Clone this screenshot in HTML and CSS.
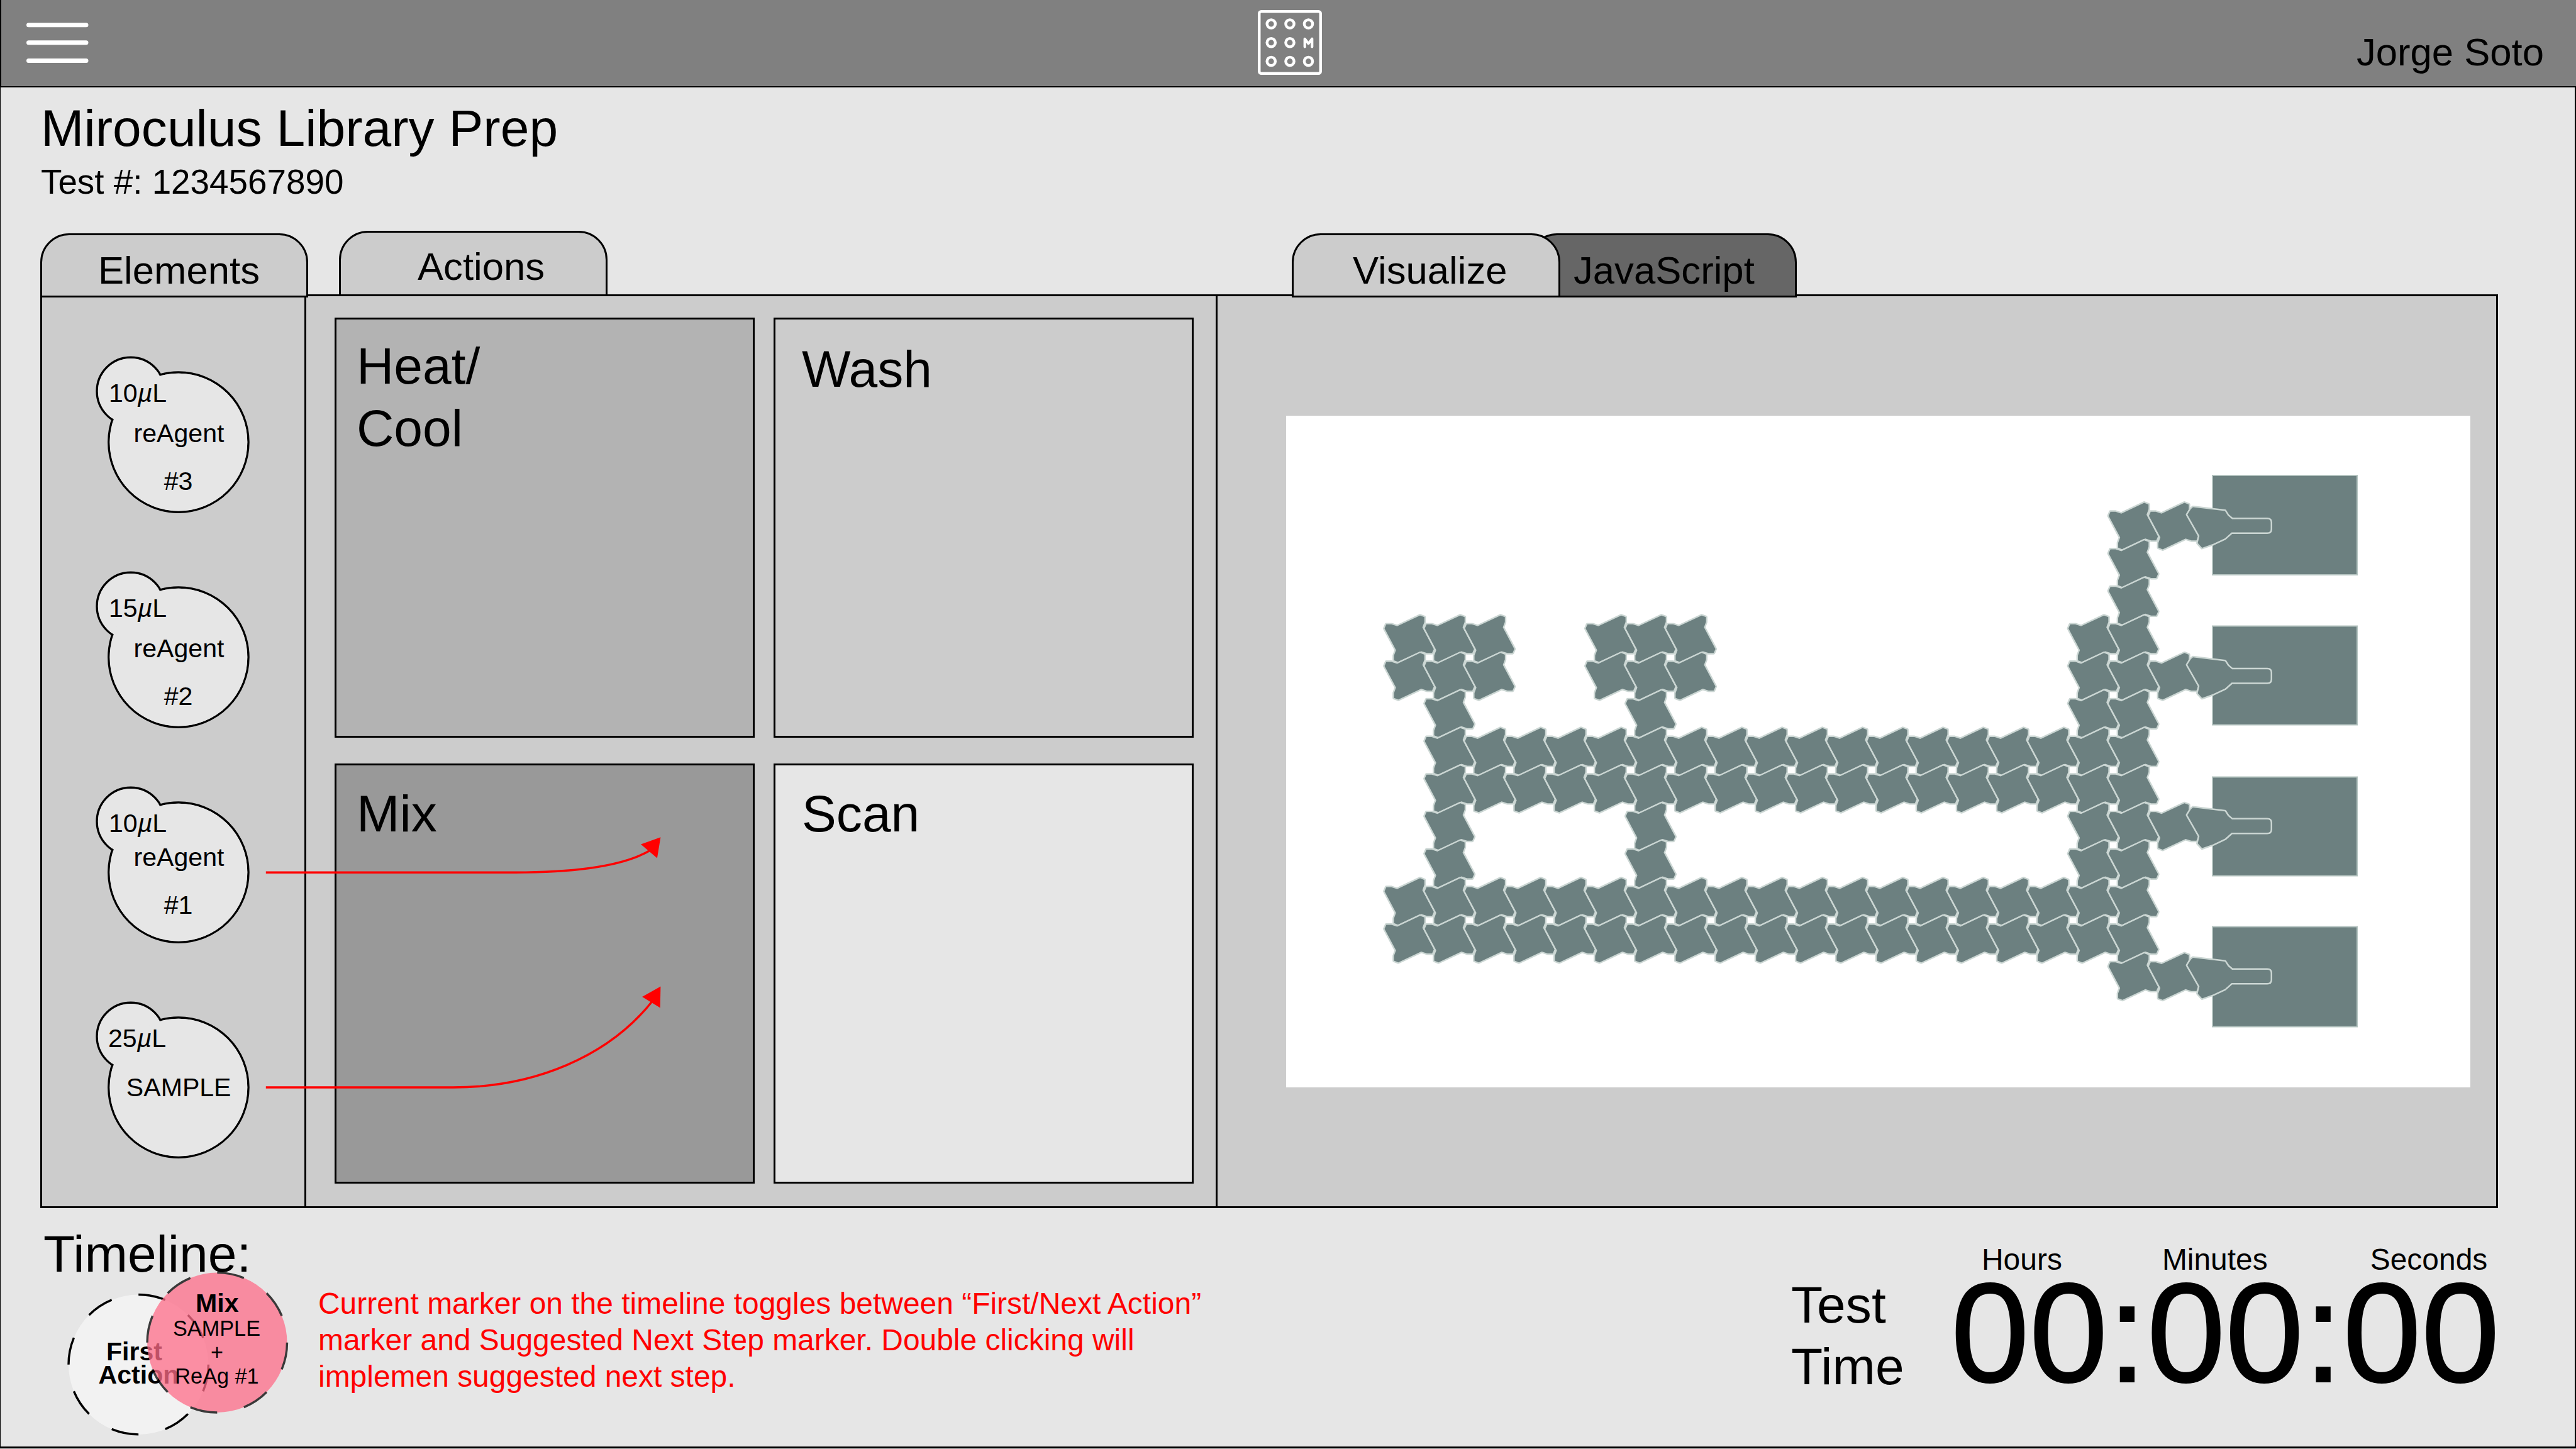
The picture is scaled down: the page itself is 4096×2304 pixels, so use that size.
FILE: index.html
```html
<!DOCTYPE html>
<html lang="en">
<head>
<meta charset="utf-8">
<title>Miroculus Library Prep</title>
<link rel="stylesheet" href="styles.css">
</head>
<body>
<div class="window">
  <header class="topbar">
    <svg class="menu" viewBox="0 0 100 66"><path d="M4.5 4.7H96M4.5 32.8H96M4.5 61.5H96"/></svg>
    <svg class="logo" viewBox="0 0 370 374">
      <rect x="8" y="8" width="354" height="358" rx="12"/>
      <g>
        <circle cx="77" cy="80" r="24"/><circle cx="185" cy="80" r="24"/><circle cx="292" cy="80" r="24"/>
        <circle cx="77" cy="188" r="24"/><circle cx="185" cy="188" r="24"/>
        <circle cx="77" cy="296" r="24"/><circle cx="185" cy="296" r="24"/><circle cx="292" cy="296" r="24"/>
      </g>
      <path d="M271 212V166L292 193L313 166V212"/>
    </svg>
    <span class="user">Jorge Soto</span>
  </header>

  <section class="heading">
    <h1>Miroculus Library Prep</h1>
    <p>Test #: 1234567890</p>
  </section>

  <main class="workspace">
    <nav class="tabs">
      <span class="tab tab-elements">Elements</span>
      <span class="tab tab-actions">Actions</span>
      <span class="tab tab-visualize">Visualize</span>
      <span class="tab tab-script">JavaScript</span>
    </nav>

    <div class="panels">
      <section class="panel elements">
        <svg class="bead" viewBox="0 0 260 342.1">
          <g class="outline"><circle cx="63.9" cy="62.1" r="53.8"/><circle cx="139.9" cy="143.1" r="111.1"/></g>
          <g class="body"><circle cx="63.9" cy="62.1" r="52.1"/><circle cx="139.9" cy="143.1" r="109.4"/></g>
          <text x="29" y="78.9">10<tspan class="mu">µ</tspan>L</text>
          <text class="mid" x="140.5" y="142.6">reAgent</text>
          <text class="mid" x="139.5" y="219.1">#3</text>
        </svg>
        <svg class="bead" viewBox="0 0 260 342.1">
          <g class="outline"><circle cx="63.9" cy="62.1" r="53.8"/><circle cx="139.9" cy="143.1" r="111.1"/></g>
          <g class="body"><circle cx="63.9" cy="62.1" r="52.1"/><circle cx="139.9" cy="143.1" r="109.4"/></g>
          <text x="29" y="78.9">15<tspan class="mu">µ</tspan>L</text>
          <text class="mid" x="140.5" y="142.6">reAgent</text>
          <text class="mid" x="139.5" y="219.1">#2</text>
        </svg>
        <svg class="bead" viewBox="0 0 260 342.1">
          <g class="outline"><circle cx="63.9" cy="62.1" r="53.8"/><circle cx="139.9" cy="143.1" r="111.1"/></g>
          <g class="body"><circle cx="63.9" cy="62.1" r="52.1"/><circle cx="139.9" cy="143.1" r="109.4"/></g>
          <text x="29" y="78.9">10<tspan class="mu">µ</tspan>L</text>
          <text class="mid" x="140.5" y="133.4">reAgent</text>
          <text class="mid" x="139.5" y="208.8">#1</text>
        </svg>
        <svg class="bead" viewBox="0 0 260 342.1">
          <g class="outline"><circle cx="63.9" cy="62.1" r="53.8"/><circle cx="139.9" cy="143.1" r="111.1"/></g>
          <g class="body"><circle cx="63.9" cy="62.1" r="52.1"/><circle cx="139.9" cy="143.1" r="109.4"/></g>
          <text x="28" y="78.9">25<tspan class="mu">µ</tspan>L</text>
          <text class="mid" x="140.2" y="157.4">SAMPLE</text>
        </svg>
      </section>

      <section class="panel actions">
        <div class="card heat">Heat/<br>Cool</div>
        <div class="card wash">Wash</div>
        <div class="card mix">Mix</div>
        <div class="card scan">Scan</div>
      </section>

      <section class="panel visual">
        <svg class="chip" viewBox="2045 661 1883 1068">
          <defs>
            <path id="tile" transform="scale(.965)" d="M17.9-38.3L25-35.6V-27.6L21.7-18.7L40.6 16.9L37.7 23.6H29.3L19.8 20.5L-17.9 38.3L-25 35.6V27.6L-21.7 18.7L-40.6-16.9L-37.7-23.6H-29.3L-19.8-20.5Z"/>
            <path id="nozzle" d="M-42-18.2L-36.5-27L-33.2-30L17.7-23.9L22.3-16.7L29-11H85Q90.4-11 90.4-6V5Q90.4 10 85 10H28.3L17.7 19.5L-1.1 28.3L-18.7 34.5L-25.5 27L-22.8 15.4Z"/>
          </defs>
          <g class="pads">
            <rect x="3518" y="756" width="230" height="158"/>
            <rect x="3518" y="995.5" width="230" height="157"/>
            <rect x="3518" y="1235.5" width="230" height="157"/>
            <rect x="3518" y="1473.5" width="230" height="159"/>
          </g>
          <g id="tiles" class="tiles"></g>
        </svg>
      </section>

      <svg class="arrows" viewBox="420 1325 640 410">
        <path class="line" d="M422.8 1387.2H819.4C915 1387.2 990 1378 1034 1352"/>
        <path class="head" d="M1050.4 1331.3L1019 1342.5L1044.9 1364.5Z"/>
        <path class="line" d="M422.8 1729H720.6C850 1729 968 1680 1038 1591"/>
        <path class="head" d="M1050.4 1568.6L1021.1 1585L1049.7 1602.6Z"/>
      </svg>
    </div>
  </main>

  <footer class="footer">
    <section class="timeline">
      <h2>Timeline:</h2>
      <svg class="markers" viewBox="105 2020 360 270">
        <circle class="first" cx="220.2" cy="2169.7" r="111.2" pathLength="16"/>
        <text class="strong" x="213.5" y="2162.6">First</text>
        <text class="strong" x="220.5" y="2200.4">Action</text>
        <circle class="next" cx="345.3" cy="2134.8" r="111.2" pathLength="16"/>
        <text class="strong" x="345.3" y="2086.4">Mix</text>
        <text x="344.5" y="2124">SAMPLE</text>
        <text x="345" y="2161.8">+</text>
        <text x="345" y="2199.6">ReAg #1</text>
      </svg>
    </section>
    <p class="note">Current marker on the timeline toggles between “First/Next Action”<br>marker and Suggested Next Step marker. Double clicking will<br>implemen suggested next step.</p>
    <div class="timer-label">Test<br>Time</div>
    <div class="timer">
      <div class="units"><span>Hours</span><span>Minutes</span><span>Seconds</span></div>
      <div class="digits">00:00:00</div>
    </div>
  </footer>
</div>
<script src="chip.js"></script>
</body>
</html>
```
FILE: chip.js
```js
// Electrode grid: column numbers of the tiles present in each row.
const PITCH_X = 63.97, PITCH_Y = 59.7, ORIGIN_X = 2240.7, ORIGIN_Y = 1015.6;
const span = (a, b) => Array.from({ length: b - a + 1 }, (_, i) => a + i);
const rows = [
  [-3, [18, 19]], [-2, [18]], [-1, [18]],
  [0, [0, 1, 2, 5, 6, 7, 17, 18]],
  [1, [0, 1, 2, 5, 6, 7, 17, 18, 19]],
  [2, [1, 6, 17, 18]],
  [3, span(1, 18)], [4, span(1, 18)],
  [5, [1, 6, 17, 18, 19]],
  [6, [1, 6, 17, 18]],
  [7, span(0, 18)], [8, span(0, 18)],
  [9, [18, 19]]
];
const group = document.getElementById('tiles');
function place(shape, col, row) {
  const use = document.createElementNS('http://www.w3.org/2000/svg', 'use');
  use.setAttribute('href', '#' + shape);
  use.setAttribute('x', ORIGIN_X + col * PITCH_X);
  use.setAttribute('y', ORIGIN_Y + row * PITCH_Y);
  group.appendChild(use);
}
for (const [row, cols] of rows) {
  for (const col of cols) place('tile', col, row);
  if (cols.includes(19)) place('nozzle', 20, row);
}
```
FILE: styles.css
```css
* { box-sizing: border-box; }
body {
  margin: 0;
  background: #ccc;
  color: #000;
  font-family: "Liberation Sans", Arial, Helvetica, sans-serif;
}
h1, h2, p { margin: 0; font-weight: 400; }
svg { display: block; }

.window {
  width: 4096px;
  height: 2303px;
  background: #e6e6e6;
  box-shadow: inset 1px 0 #000, inset -2px 0 #000, inset 0 -3px #000;
  overflow: hidden;
}

.topbar {
  height: 139px;
  background: #808080;
  border-bottom: 2px solid #000;
  border-left: 2px solid #000;
  display: grid;
  grid-template-columns: 1fr 102px 1fr;
}
.menu { width: 100px; height: 66px; margin: 35px 0 0 39px; }
.menu path { stroke: #fff; stroke-width: 7; stroke-linecap: round; }
.logo { width: 102px; height: 103px; margin-top: 16px; fill: none; stroke: #fff; stroke-width: 16; position: relative; left: 2px; }
.logo path { stroke-width: 15; stroke-linecap: round; stroke-linejoin: round; }
.user { justify-self: end; margin: 48px 51px 0 0; font-size: 61.65px; line-height: 70px; }

.heading { padding: 16px 0 0 65px; height: 228px; }
.heading h1 { font-size: 82.2px; line-height: 98px; }
.heading p { font-size: 54.8px; line-height: 66px; margin-top: 3px; }

.workspace { width: 3908px; margin-left: 64px; }
.tabs { display: flex; height: 101px; align-items: flex-start; }
.tab {
  width: 427px;
  height: 102px;
  margin-top: 4px;
  border: 3px solid #000;
  border-radius: 46px 46px 0 0;
  background: #ccc;
  font-size: 61.65px;
  line-height: 70px;
  position: relative;
  z-index: 1;
}
.tab-elements { width: 426px; padding: 21px 0 0 89px; }
.tab-actions { margin: 0 0 0 49px; height: 104px; padding: 19px 0 0 122px; }
.tab-visualize { margin-left: 1088px; padding: 21px 0 0 94px; z-index: 2; }
.tab-script { margin-left: -51px; padding: 21px 0 0 69px; background: #666; }

.panels { display: flex; height: 1453px; position: relative; }
.panel { border: 3px solid #000; background: #ccc; }
.panel + .panel { margin-left: -3px; }
.elements { width: 423px; padding: 89px 0 0 77px; }
.bead { width: 260px; height: 342.1px; font-size: 41.1px; }
.bead .outline { fill: none; stroke: #000; stroke-width: 3.43; }
.bead .body { fill: #e6e6e6; }
.bead .mid { text-anchor: middle; }
.bead .mu { font-style: italic; }

.actions {
  width: 1452px;
  padding: 34px 0 0 45px;
  display: grid;
  grid-template-columns: 668px 668px;
  grid-template-rows: 668px 668px;
  gap: 41px 30px;
}
.card { border: 3px solid #000; font-size: 82.2px; line-height: 98.6px; }
.heat { background: #b3b3b3; padding: 25px 0 0 32px; }
.wash { background: #ccc; padding: 30px 0 0 42px; }
.mix { background: #999; padding: 28px 0 0 32px; }
.scan { background: #e6e6e6; padding: 28px 0 0 42px; }

.visual { width: 2039px; padding: 190px 0 0 109px; }
.chip { width: 1883px; height: 1068px; background: #fff; }
.pads { fill: #6c8080; stroke: #b4c3c0; stroke-width: 2; }
.tiles { fill: #6c8080; stroke: #cbd6d3; stroke-width: 5; stroke-linejoin: round; paint-order: stroke; }

.arrows { position: absolute; left: 356px; top: 857px; width: 640px; height: 410px; z-index: 3; }
.arrows .line { fill: none; stroke: #f00; stroke-width: 3.43; }
.arrows .head { fill: #f00; }

.footer { display: flex; align-items: flex-start; }
.timeline { width: 396px; margin: 24px 0 0 69px; }
.timeline h2 { font-size: 82.2px; line-height: 98.6px; }
.markers { width: 360px; height: 270px; margin: -23.6px 0 0 36px; font-size: 34.25px; text-anchor: middle; }
.markers circle { stroke: #000; stroke-width: 3.43; stroke-dasharray: 1 1; }
.markers .first { fill: #f2f2f2; }
.markers .next { fill: #ff6d89; opacity: .75; }
.markers .strong { font-size: 41.1px; font-weight: 700; }
.note { margin: 123.4px 0 0 41px; width: 1500px; font-size: 47.95px; line-height: 57.8px; color: #f00; white-space: nowrap; }
.timer-label { margin: 104.7px 0 0 842px; width: 254px; font-size: 82.2px; line-height: 98.6px; }
.timer { margin-top: 53px; white-space: nowrap; }
.units { display: flex; padding-left: 49px; font-size: 47.95px; line-height: 58px; }
.units span + span { margin-left: 159px; }
.units span:last-child { margin-left: 163px; }
.digits { font-size: 224.2px; line-height: 175px; -webkit-text-stroke: 2px #000; }
```
